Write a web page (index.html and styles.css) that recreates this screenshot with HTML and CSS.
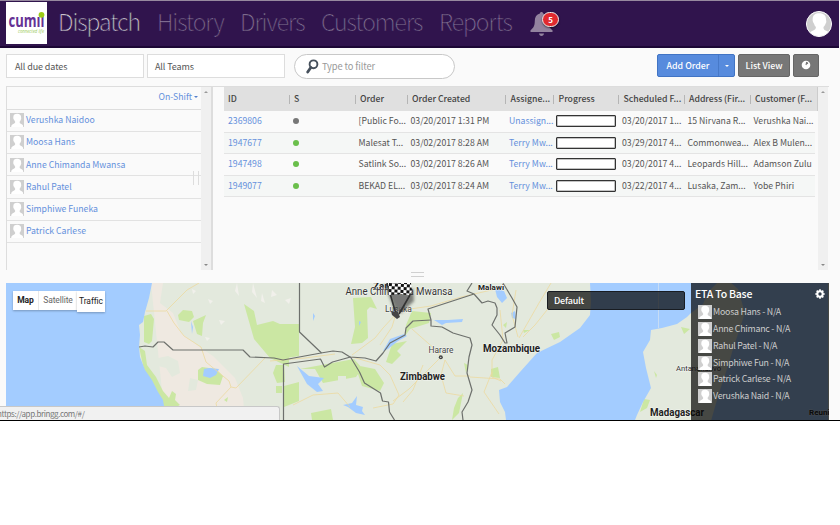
FILE: index.html
```
<!DOCTYPE html>
<html lang="en">
<head>
<meta charset="utf-8">
<title>Dispatch</title>
<link rel="stylesheet" href="styles.css">
</head>
<body>
<svg width="0" height="0" class="defs">
  <symbol id="person" viewBox="0 0 14 14">
    <rect width="14" height="14" fill="#cfcfcf"/>
    <path d="M3.300 4.400C3.200 1.900 4.800.8 7.200.8S11.200 2 11.100 4.600c.3.800.2 1.600-.3 2.200-.3 1-.8 1.600-1.200 2 0 1.300.4 1.700 1.600 2.200 1.400.5 2 1.300 2 3H1.200c0-1.700.8-2.500 2.100-3 1.400-.5 1.900-1.100 1.900-2.200-.5-.5-.9-1.200-1.100-2-.5-.6-.9-1.500-.8-2.400z" fill="#fff"/>
  </symbol>
</svg>
<div class="app">
  <header class="topbar">
    <div class="logo">
      <svg width="41" height="42" viewBox="0 0 41 42">
        <text x="2.500" y="24.500" class="logo-name" textLength="36" lengthAdjust="spacingAndGlyphs">cumıı</text>
        <circle cx="35.500" cy="12.800" r="2.900" fill="#9ccb16"/>
        <text x="12" y="30.500" class="logo-tag" textLength="26" lengthAdjust="spacingAndGlyphs">connected life</text>
      </svg>
    </div>
    <nav class="nav">
      <a class="n1 active">Dispatch</a><a class="n2">History</a><a class="n3">Drivers</a><a class="n4">Customers</a><a class="n5">Reports</a>
    </nav>
    <div class="bell">
      <svg width="24" height="26" viewBox="0 0 24 26"><path d="M11.500 1c1 0 1.500.7 1.600 1.600 3.400.8 5.100 3.600 5.100 7.200 0 5.200 1.600 7.500 4.300 9.400v1.800H.5v-1.800c2.700-1.900 4.300-4.200 4.300-9.400 0-3.600 1.700-6.400 5.100-7.200.1-.9.6-1.600 1.600-1.600zM9 22.600h5c-.2 1.500-1.100 2.400-2.500 2.400S9.200 24.100 9 22.600z" fill="#93839f"/></svg>
      <span class="badge">5</span>
    </div>
    <svg class="avatar" width="26" height="26"><use href="#person"/></svg>
  </header>

  <div class="toolbar">
    <div class="select dates">All due dates</div>
    <div class="select teams">All Teams</div>
    <div class="search">
      <svg width="13" height="15" viewBox="0 0 13 15"><circle cx="7.500" cy="5.300" r="3.900" fill="none" stroke="#46505c" stroke-width="1.900"/><path d="M4.800 8.500L1.700 13" stroke="#46505c" stroke-width="2.800" stroke-linecap="round"/></svg>
      <span>Type to filter</span>
    </div>
    <div class="buttons">
      <div class="btn-group"><span class="btn-main">Add Order</span><span class="btn-caret"><i class="caret"></i></span></div>
      <span class="btn list">List View</span>
      <span class="btn globe"><svg width="10" height="10" viewBox="0 0 10 10"><circle cx="5" cy="5" r="4.300" fill="#fff"/><path d="M5 1.800l2 .6.2 1.300-1.300.6-.6.9-.9-.6.5-1.300z" fill="#777"/></svg></span>
    </div>
  </div>

  <div class="panels">
    <aside class="drivers">
      <div class="list">
        <div class="shift">On-Shift<i class="caret blue"></i></div>
        <div class="driver"><svg><use href="#person"/></svg><span>Verushka Naidoo</span></div>
        <div class="driver"><svg><use href="#person"/></svg><span>Moosa Hans</span></div>
        <div class="driver"><svg><use href="#person"/></svg><span>Anne Chimanda Mwansa</span></div>
        <div class="driver"><svg><use href="#person"/></svg><span>Rahul Patel</span></div>
        <div class="driver"><svg><use href="#person"/></svg><span>Simphiwe Funeka</span></div>
        <div class="driver"><svg><use href="#person"/></svg><span>Patrick Carlese</span></div>
      </div>
      <div class="scroll"><i class="up"></i><i class="down"></i></div>
      <div class="grip-v"></div>
    </aside>
    <section class="orders">
      <div class="grid">
        <div class="row head"><b>ID</b><b>S</b><b>Order</b><b>Order Created</b><b>Assigne...</b><b>Progress</b><b>Scheduled F...</b><b>Address (Fir...</b><b>Customer (F...</b></div>
        <div class="row"><a>2369806</a><span><i class="dot gray"></i></span><span>[Public Fo...</span><span>03/20/2017 1:31 PM</span><a>Unassign...</a><span><i class="bar"></i></span><span>03/20/2017 1...</span><span>15 Nirvana R...</span><span>Verushka Nai...</span></div>
        <div class="row alt"><a>1947677</a><span><i class="dot"></i></span><span>Malesat T...</span><span>03/02/2017 8:28 AM</span><a>Terry Mw...</a><span><i class="bar"></i></span><span>03/29/2017 4...</span><span>Commonwea...</span><span>Alex B Mulen...</span></div>
        <div class="row"><a>1947498</a><span><i class="dot"></i></span><span>Satlink So...</span><span>03/02/2017 8:26 AM</span><a>Terry Mw...</a><span><i class="bar"></i></span><span>03/20/2017 4...</span><span>Leopards Hill...</span><span>Adamson Zulu</span></div>
        <div class="row alt"><a>1949077</a><span><i class="dot"></i></span><span>BEKAD EL...</span><span>03/02/2017 8:24 AM</span><a>Terry Mw...</a><span><i class="bar"></i></span><span>03/22/2017 4...</span><span>Lusaka, Zam...</span><span>Yobe Phiri</span></div>
      </div>
      <div class="scroll"><i class="up"></i><i class="down"></i></div>
    </section>
  </div>
  <div class="grip-h"><i></i></div>

  <div class="map">
    <svg class="mapsvg" width="823" height="137" viewBox="6 283 823 137">
      <defs>
        <pattern id="check" width="6" height="6" patternUnits="userSpaceOnUse" patternTransform="translate(389 283) rotate(4)"><rect width="6" height="6" fill="#fff"/><path d="M0 0h3v3H0zM3 3h3v3H3z" fill="#111"/></pattern>
        <filter id="soft" x="-50%" y="-50%" width="200%" height="200%"><feGaussianBlur stdDeviation="1.600"/></filter>
      </defs>
      <rect x="6" y="283" width="823" height="137" fill="#e3e9dd"/>
      <path d="M151 283h12l-3 20 13 10 8 20 20 15 12 8 22 22 8 20 2 22h-80z" fill="#efe9e1"/>
      <path d="M158 358l10-2 10 5 2 12-8 4-6-9-8-2zM190 378l8 2-2 10-8 1zM165 300l9 2-4 8z" fill="#e3e9dd"/>
      <g fill="#f1f0eb"><path d="M208 299l5 2-3 3zM192 289l4 2-3 3zM219 320l6 1-4 4zM237 283l2 13-4-5zM253 283l4 15-5-6zM272 290l5 5-6 2zM285 300l6-2-2 6zM205 337l5 1-3 3zM262 293l3 10-4-2z"/></g>
      <g fill="#cbe7a3">
        <path d="M144 316l7-2 3 5-2 22-3 3-5-2zM178 315l5-5 9 1 2 6-5 5-10-2zM193 321l13-6-3 8-1 13-5-2zM244 304l10 7 3 14 16-4 16 7v39l-19-9-16-19z"/>
        <path d="M198 370l4-3 14 2 7 7-3 9-13-1-9-4zM284 365h-8l-3 8 4 10 8-1zM276 386h6v7h-6zM224 400l4-3-1 5z"/>
        <path d="M139 347l6 4 2 14 9 12 7 14 6 7 3-7 4 3-1 6 5 5-6 3 2 12h-12l-3-18-8-18-9-14z"/>
        <path d="M268 324h31v32l-19 3-12-6zM353 298l18-1 1 8-5 5 1 28-6 5-11 1 4-17zM392 344l15-3-10 10 4 4-9 9-6-2zM371 297l6 12-7-2zM406 325l6-14 19 2-2 10-19 6-5 7zM300 369l54-10 8 9-6 9-33 6-8-14zM355 365l20 4 9 14-4 8-18-5zM284 386l15-4v19l-15 6zM311 413l20-4 2 11h-21zM458 398l5-5-4 20-7 7 2-12zM491 369l7-2 2 11-9-1zM464 363l4 2-2 8zM523 330l7 0-6 3zM551 334l8-2 1 5-6 3zM503 325l4-3-1 6z"/>
        <path d="M644 399l6 1-3 8-7 4zM654 371l3 4-1 3zM681 327l9 2-6 5zM697 365l4 5-3 6z"/>
      </g>
      <rect x="338" y="376" width="8" height="9" fill="#e3e9dd"/>
      <g fill="#a3ccff">
        <path d="M6 283h146l-3 15-4 14-2 10-4 3 1 10-1 12 1 10 5 13 7 10 6 12 5 8 1 6 3 14H6z"/>
        <path d="M590 283l1 19-1 13-10 13-20 14-23 11-17 19-13 15-8 3 1 12 5 10 1 8H635l2-5 6-13 8-14-5-20-3-16 7-12 1-10 11-2 15-4 10-7 4-4 12-9 5-12 9-9 12-2 9 8 7 24-12 36-4 14-10 30-8 28h117V283z"/>
        <path d="M204 369l5-1 10 1-3 6-6 3-7-2zM383 351l7-12 14-5 3 2-9 5-10 8zM297 366l12 10 15 2-6 6 5 7-6 1-10-8zM343 405l9-2 5-7-1 9 7 2-1 4 3 4-9-2-8-6zM434 320l14 0 15-1-1 3-16 1-4 2zM495 289l9 2 3 7-5 5-5-6zM511 313l4-2 1 8-4-1zM191 321l2 6-1 7zM313 313l2 3-2 5zM359 321l2 1-2 4z"/>
      </g>
      <g fill="none" stroke="#ecd9a0" stroke-width=".8">
        <path d="M146 311h20l21-21 12-7M167 311l7 12 10 13 17 11 5 15 23 19 2 6-15 16 2 10M231 387l5 1 29-30"/>
        <path d="M270 361l35-3 30-4M352 355l23-17 8-10 12-13 8-5 28-4 30-9 35-8M398 307l-6 20-12 18M352 357l28 8 10 10 9 20-6 9-20 4M412 329l25 22 5 8M439 359l-30 30-16 12M445 360l-4 15 5 18 18 3M445 360l10 16 15 0M423 365l-10 25-10 12M293 405l20-10 25-2 12 14M500 310l3 30-11 20 0 17 9 4M516 290l-4 25 6 22M470 377l30 2 5 5M551 283l-12 20-20 35M492 372l-8 20 15 22M555 300l-20 25-12 12"/>
      </g>
      <path d="M658.500 283v45" stroke="#c6dcf5"/>
      <g fill="none" stroke="#6d706c" stroke-width="1.200" stroke-linejoin="round">
        <path d="M139 347l6-1 8 1 5-5h6l9 8h70l7 7 24 1 9 2 38-7 12-2 9 1 8 5 15 1 11 3 7-8 7-10 15-8 1-7 7-7 18-1"/>
        <path d="M299.500 283v49l22 21M283.500 420v-56l37-5 4 8 8-5 18-5 9 15 5 11 16 10 2 8 6 1 1 10 5 8"/>
        <path d="M474 294l-46 15 3 11v6l11 1 11 6 17 5 2 7-3 12-2 16 5 17-4 12-6 10 1 8M472 283l-5 8 7 3 8 9 6-2 7 2 2 5v7l-5 10 8 10 5 8h2l-2-10 10-6 2-20-5-9-9-15"/>
      </g>
      <g class="labels">
        <text x="373" y="290" class="big">Zambia</text>
        <text x="478" y="290" class="mid" textLength="26">Malawi</text>
        <text x="483" y="351.500" class="big" textLength="57" lengthAdjust="spacingAndGlyphs">Mozambique</text>
        <text x="400" y="380" class="big" textLength="45" lengthAdjust="spacingAndGlyphs">Zimbabwe</text>
        <text x="428.500" y="353" textLength="25" lengthAdjust="spacingAndGlyphs">Harare</text>
        <text x="385" y="312" textLength="27" lengthAdjust="spacingAndGlyphs">Lusaka</text>
        <text x="676" y="370.500" class="small" textLength="45" lengthAdjust="spacingAndGlyphs">Antananarivo</text>
        <text x="650" y="415.500" class="big" textLength="54" lengthAdjust="spacingAndGlyphs">Madagascar</text>
        <text x="809" y="415" class="mid">Reunion</text>
        <text x="345.500" y="295" class="person" textLength="107" lengthAdjust="spacingAndGlyphs">Anne Chimanda Mwansa</text>
      </g>
      <circle cx="440.800" cy="357.300" r="2" fill="#444"/><circle cx="440.800" cy="357.300" r=".6" fill="#fff"/>
      <path d="M385 284l28 5 1 12-13 12-6-2-7-18z" fill="#333" opacity=".6" filter="url(#soft)"/>
      <path d="M391 295l18 1-8 14z" fill="#777" opacity=".8"/>
      <path d="M387 283l9 31M410 295l-11 19" stroke="#333" stroke-width="1.600"/>
      <path d="M388 283h23l1 8-3 4-9-1-11 1z" fill="url(#check)"/>
      <path d="M391 311l3 1 4 0 2 5-3 2-5-4z" fill="#444"/>
    </svg>
    <div class="maptype"><b>Map</b><span>Satellite</span></div>
    <div class="traffic">Traffic</div>
    <div class="default">Default</div>
    <div class="eta">
      <div class="eta-head"><b>ETA To Base</b><svg width="10" height="10" viewBox="0 0 10 10"><circle cx="5" cy="5" r="2.700" fill="none" stroke="#fff" stroke-width="2"/><path d="M5 .3v2M5 7.700v2M.3 5h2M7.700 5h2M1.700 1.700l1.200 1.200M7.100 7.100l1.200 1.200M8.300 1.700L7.100 2.900M2.900 7.100L1.700 8.300" stroke="#fff" stroke-width="1.700"/></svg></div>
      <div class="eta-row"><svg><use href="#person"/></svg><span>Moosa Hans - N/A</span></div>
      <div class="eta-row"><svg><use href="#person"/></svg><span>Anne Chimanc - N/A</span></div>
      <div class="eta-row"><svg><use href="#person"/></svg><span>Rahul Patel - N/A</span></div>
      <div class="eta-row"><svg><use href="#person"/></svg><span>Simphiwe Fun - N/A</span></div>
      <div class="eta-row"><svg><use href="#person"/></svg><span>Patrick Carlese - N/A</span></div>
      <div class="eta-row"><svg><use href="#person"/></svg><span>Verushka Naid - N/A</span></div>
    </div>
    <div class="status">https://app.bringg.com/#/</div>
  </div>
</div>
</body>
</html>
```
FILE: styles.css
```
* { box-sizing: border-box; }
body { margin: 0; background: #fff; font-family: "Noto Sans CJK SC", "Noto Sans", sans-serif; font-size: 9px; line-height: 12px; color: #555; overflow: hidden; }
.defs { position: absolute; }
.app { width: 840px; height: 421px; background: #fafafa; border-bottom: 1px solid #000; display: flex; flex-direction: column; }

.topbar { height: 48px; width: 839px; flex: none; background: #30144d; border-top: 1px solid #97899f; border-bottom: 2px solid #1c0735; display: flex; align-items: flex-start; padding-left: 6px; }
.logo { width: 41px; height: 42px; margin-top: 1px; background: #fff; }
.logo svg { display: block; }
.logo-name { font: bold 17px "Open Sans", sans-serif; fill: #653295; }
.logo-tag { font: italic 5px "Open Sans", sans-serif; fill: #9ccb5c; }
.nav { display: flex; height: 44px; font-size: 23px; font-weight: 300; letter-spacing: -1.050px; line-height: 41px; color: #9888a6; -webkit-text-stroke: .6px #30144d; margin-left: 11px; white-space: nowrap; }
.nav .active { color: #fff; }
.n1 { width: 99px; }
.n2 { width: 83px; }
.n3 { width: 81px; }
.n4 { width: 118px; }
.n5 { width: 80px; }
.bell { position: relative; margin: 10px 0 0 11px; width: 24px; height: 26px; }
.badge { position: absolute; left: 12px; top: 1px; width: 17px; height: 15px; border-radius: 8px; border: 1px solid #eee; background: #e02a2f; color: #fff; font-weight: bold; font-size: 8px; line-height: 13px; text-align: center; box-shadow: 0 1px 2px #0008; }
.avatar { margin: 10px 7px 0 auto; border-radius: 50%; border: 1px solid #fff; background: #fff; }

.toolbar { display: flex; height: 38px; flex: none; padding: 6px 0 0 6px; align-items: flex-start; }
.select { width: 138px; height: 24px; background: #fff; border: 1px solid #ddd; padding: 0 8px; line-height: 23px; margin-right: 3px; letter-spacing: -.1px; }
.teams { padding-left: 7px; }
.search { margin-left: 6px; width: 161px; height: 25px; border: 1px solid #c8c8c8; border-radius: 13px; background: #fff; display: flex; align-items: center; padding-left: 11px; gap: 3px; color: #999; font-size: 9.300px; letter-spacing: -.1px; line-height: 11px; }
.buttons { display: flex; margin-left: 202px; color: #fff; font-weight: 500; font-size: 8.800px; gap: 3px; line-height: 21px; text-align: center; }
.btn-group { display: flex; width: 78px; height: 23px; border: 1px solid #4174c4; border-radius: 2px; background: #578bdd; }
.btn-main { width: 61px; border-right: 1px solid #4779c8; }
.btn-caret { flex: 1; }
.caret { display: inline-block; border: 2.500px solid transparent; border-top-color: #fff; border-bottom: 0; vertical-align: 2px; }
.caret.blue { border-top-color: #5580cc; margin-left: 2px; }
.btn { height: 23px; background: #777; border: 1px solid #666; border-radius: 2px; }
.btn.list { width: 52px; }
.globe { width: 26px; }
.globe svg { vertical-align: -1px; }

.panels { display: flex; height: 184px; flex: none; padding-left: 6px; font-size: 8.700px; }
.drivers { position: relative; width: 207px; display: flex; border: 1px solid #ddd; border-width: 1px 2px 0 1px; }
.drivers .list { width: 194px; color: #6490dc; }
.shift { height: 22.500px; border-bottom: 1px solid #ddd; text-align: right; padding-right: 3px; line-height: 20px; }
.driver { height: 22.250px; border-bottom: 1px solid #e2e2e2; display: flex; align-items: center; gap: 2px; padding-left: 3px; }
.driver svg { width: 14px; height: 14px; }
.scroll { width: 10px; background: #f0f0f0; display: flex; flex-direction: column; justify-content: space-between; align-items: center; padding: 4px 0; }
.up { border: 2.500px solid transparent; border-bottom-color: #999; border-top: 0; }
.down { border: 2.500px solid transparent; border-top-color: #888; border-bottom: 0; }
.grip-v { position: absolute; left: 186px; top: 84px; width: 6px; height: 14px; border: 1px solid #ddd; border-width: 0 1px; }
.orders { display: flex; width: 616px; border-top: 1px solid #ddd; padding-left: 11px; }
.grid { width: 594px; }
.row { display: grid; grid-template-columns: 64.500px 66px 52px 98.500px 48px 65px 65.500px 66px 66px; height: 21.500px; width: 591px; border-bottom: 1px solid #e4e4e4; align-items: center; white-space: nowrap; }
.row > * { padding-left: 4px; }
.row > a { color: #6490dc; }
.row.alt { background: #f5f7f6; }
.head { height: 24px; width: 594px; background: #e0e0e0; border: 0; border-right: 1px solid #ccc; color: #444; }
.head b { font-weight: 500; }
.head b + b { background: linear-gradient(#b5b5b5, #b5b5b5) 0 50% / 1px 9px no-repeat; padding-left: 5.500px; }
.dot { display: block; width: 6px; height: 6px; border-radius: 3px; background: #6abf4b; }
.dot.gray { background: #777; }
.bar { display: block; width: 60px; height: 12px; margin-left: -1px; background: #fff; border: 1px solid #333; border-radius: 1px; box-shadow: inset 0 0 0 .5px #888; }
.grip-h { height: 13px; flex: none; padding: 2px 0 0 411px; }
.grip-h i { display: block; width: 13px; height: 5px; border: 1px solid #d0d0d0; border-width: 1px 0; }

.map { position: relative; height: 137px; width: 823px; margin-left: 6px; }
.mapsvg { display: block; }
.labels text { font: 8.500px Roboto, sans-serif; fill: #444; stroke: #fff; stroke-width: 1px; stroke-opacity: .6; paint-order: stroke; }
.labels .big { font-size: 10px; font-weight: 700; fill: #222; }
.labels .mid { font-size: 8px; font-weight: 700; fill: #222; }
.labels .small { font-size: 8px; fill: #333; }
.labels .person { font-size: 10px; fill: #333; }
.maptype { position: absolute; left: 7px; top: 8px; width: 64px; height: 19px; display: flex; background: #fff; font: 8.500px/19px Roboto, sans-serif; letter-spacing: -.1px; color: #666; text-align: center; box-shadow: 0 1px 2px #0004; }
.maptype b { width: 26px; border-right: 1px solid #e8e8e8; color: #222; }
.maptype span { flex: 1; }
.traffic { position: absolute; left: 71px; top: 8px; width: 28px; height: 21px; background: #fff; font: 8.500px/21px Roboto, sans-serif; letter-spacing: -.1px; color: #222; text-align: center; box-shadow: 0 1px 2px #0004; }
.default { position: absolute; left: 541px; top: 8px; width: 138px; height: 19px; border: 1px solid #181c22; border-radius: 2px; background: rgba(3,3,3,.71); color: #fff; font-weight: 500; line-height: 18px; padding-left: 6px; letter-spacing: -.2px; }
.eta { position: absolute; left: 685px; top: 0; width: 138px; height: 137px; background: rgba(3,3,3,.7); color: #ccc; font-size: 8.800px; letter-spacing: -.22px; }
.eta-head { display: flex; justify-content: space-between; align-items: center; height: 21px; padding: 0 4px; color: #fff; font-size: 10.500px; }
.eta-head b { font-weight: 500; }
.eta-row { display: flex; align-items: center; height: 16.750px; padding-left: 7px; gap: 1px; white-space: nowrap; }
.eta-row svg { width: 14px; height: 14px; }
.status { position: absolute; left: -6px; bottom: 0; width: 280px; height: 14px; background: #f1f1f1; border: 1px solid #c8c8c8; border-width: 1px 1px 0 0; border-radius: 0 3px 0 0; color: #777; font-size: 8px; letter-spacing: -.4px; line-height: 13px; text-indent: -3px; overflow: hidden; }
```
